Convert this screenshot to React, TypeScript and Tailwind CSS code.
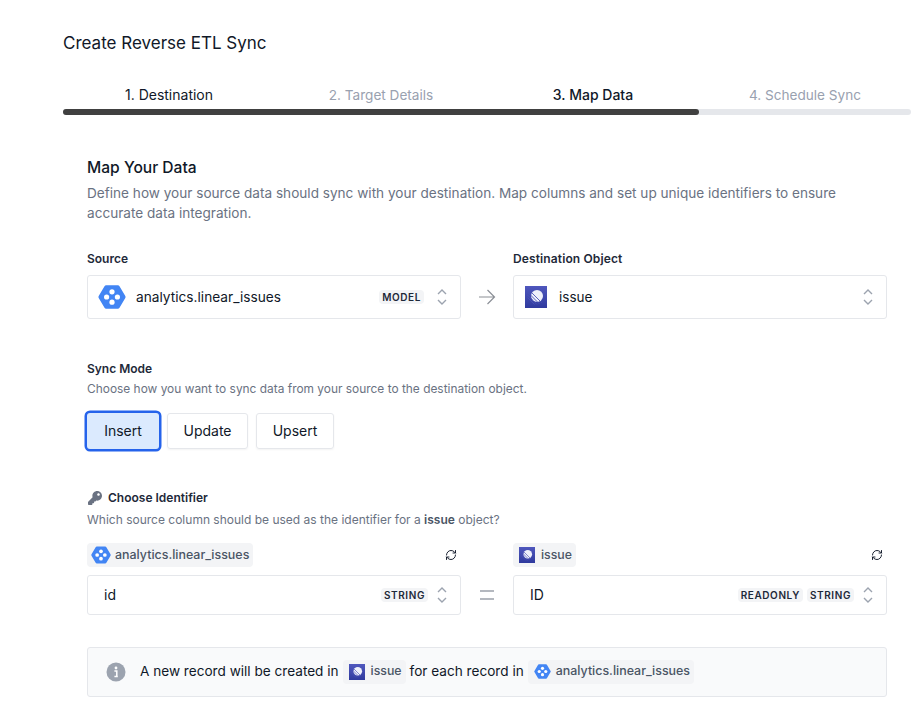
import { RefreshCw } from "lucide-react";
import { FaKey } from "react-icons/fa";

const steps = [
  { label: "1. Destination", className: "text-sm text-gray-900" },
  { label: "2. Target Details", className: "text-[13.6px] text-gray-400" },
  { label: "3. Map Data", className: "text-sm font-medium text-gray-900" },
  { label: "4. Schedule Sync", className: "text-[13.6px] text-gray-400" },
];

function HexIcon({ size }: { size: number }) {
  return (
    <svg width={size} height={size} viewBox="0 0 28 28" className="shrink-0">
      <path d="M8.2 2.2h11.6a2 2 0 0 1 1.7 1l5.8 9.8a2 2 0 0 1 0 2l-5.8 9.8a2 2 0 0 1-1.7 1H8.2a2 2 0 0 1-1.7-1L.7 15a2 2 0 0 1 0-2l5.8-9.8a2 2 0 0 1 1.7-1z" fill="#4285f4" />
      <circle cx="14" cy="8.8" r="2.6" fill="#fff" />
      <circle cx="8.6" cy="14" r="2.6" fill="#fff" />
      <circle cx="19.4" cy="14" r="2.6" fill="#fff" />
      <circle cx="14" cy="19.2" r="2.6" fill="#fff" />
    </svg>
  );
}

function LinearIcon({ size }: { size: number }) {
  return (
    <svg width={size} height={size} viewBox="0 0 22 22" className="shrink-0">
      <defs>
        <linearGradient id="linearBg" x1="0" y1="0" x2="0" y2="1">
          <stop offset="0" stopColor="#4f57bd" />
          <stop offset="1" stopColor="#2f3a9e" />
        </linearGradient>
      </defs>
      <rect width="22" height="22" fill="url(#linearBg)" />
      <circle cx="12" cy="10" r="6" fill="#eef0fa" />
      <path d="M3 6.5l11.5 11.5M2.5 9l9.5 9.5M2.5 11.5l7 7M6 6l10.5 10.5" stroke="#4a52b4" strokeWidth="0.9" />
    </svg>
  );
}

function UpDown() {
  return (
    <svg width="12" height="18" viewBox="0 0 12 18" fill="none" stroke="#9ca3af" strokeWidth="1.4" className="shrink-0">
      <path d="M2 6l4-4 4 4M2 12l4 4 4-4" />
    </svg>
  );
}

function Tag({ children }: { children: string }) {
  return (
    <span className="bg-gray-100 rounded px-[3px] h-[14px] flex items-center text-[10px] font-semibold tracking-[0.06em] text-gray-800">
      {children}
    </span>
  );
}

function Chip({ children, className }: { children: React.ReactNode; className: string }) {
  return (
    <span className={`inline-flex items-center bg-gray-100 rounded text-gray-600 font-medium ${className}`}>
      {children}
    </span>
  );
}

export default function App() {
  return (
    <div className="w-[924px] h-[728px] overflow-hidden bg-white pl-[63px] pr-[13px] pt-[33px] text-gray-900 font-['Inter',sans-serif]">
      <h1 className="text-[17px] leading-[20px] text-gray-900">Create Reverse ETL Sync</h1>

      {/* Steps */}
      <div className="mt-[32px]">
        <div className="grid grid-cols-4">
          {steps.map((s) => (
            <div key={s.label} className={`text-center leading-[20px] ${s.className}`}>
              {s.label}
            </div>
          ))}
        </div>
        <div className="mt-[4px] h-[6px] rounded-full bg-gray-200">
          <div className="h-full w-3/4 rounded-full bg-[#404040]" />
        </div>
      </div>

      <div className="px-[24px] pt-[43px]">
        <h2 className="text-[15.6px] leading-[20px] font-medium text-gray-900">Map Your Data</h2>
        <p className="mt-[5px] text-[13.6px] leading-[20px] text-gray-500">
          Define how your source data should sync with your destination. Map columns and set up unique identifiers to ensure accurate data integration.
        </p>

        {/* Source / destination */}
        <div className="mt-[28px] flex">
          <div className="w-[374px]">
            <div className="text-xs leading-[16px] font-semibold text-gray-800">Source</div>
            <div className="mt-[8px] h-[44px] border border-gray-200 rounded-[3px] flex items-center pl-[10px] pr-[12px]">
              <HexIcon size={28} />
              <span className="ml-[10px] text-[13.7px] text-gray-900">analytics.linear_issues</span>
              <span className="ml-auto mr-[12px]"><Tag>MODEL</Tag></span>
              <UpDown />
            </div>
          </div>
          <div className="w-[52px] flex items-center justify-center pt-[24px]">
            <svg width="18" height="16" viewBox="0 0 18 16" fill="none" stroke="#8b8f96" strokeWidth="1.2">
              <path d="M1 8h15.5M9.5 1l7 7-7 7" />
            </svg>
          </div>
          <div className="w-[374px]">
            <div className="text-xs leading-[16px] font-semibold tracking-[0.01em] text-gray-800">Destination Object</div>
            <div className="mt-[8px] h-[44px] border border-gray-200 rounded-[3px] flex items-center pl-[11px] pr-[12px]">
              <LinearIcon size={22} />
              <span className="ml-[12px] text-[13.5px] text-gray-900">issue</span>
              <span className="ml-auto"><UpDown /></span>
            </div>
          </div>
        </div>

        {/* Sync mode */}
        <div className="mt-[42px] text-xs leading-[16px] font-semibold text-gray-800">Sync Mode</div>
        <p className="mt-[4px] text-[11.92px] leading-[16px] text-gray-500">Choose how you want to sync data from your source to the destination object.</p>
        <div className="mt-[16px] flex gap-[8px]">
          <button className="w-[72px] h-[36px] rounded-[3px] bg-blue-100 ring-[2.5px] ring-[#2563eb] text-sm text-gray-900">Insert</button>
          <button className="w-[81px] h-[36px] rounded-[3px] border border-gray-200 shadow-xs text-sm text-gray-900">Update</button>
          <button className="w-[78px] h-[36px] rounded-[3px] border border-gray-200 shadow-xs text-sm text-gray-900">Upsert</button>
        </div>

        {/* Identifier */}
        <div className="mt-[41px] flex items-center text-xs leading-[16px] font-semibold text-gray-800">
          <FaKey size={14} className="text-gray-500 mr-[6px] ml-[1px]" />
          Choose Identifier
        </div>
        <p className="mt-[6px] text-xs leading-[16px] text-gray-500">
          Which source column should be used as the identifier for a <b className="font-semibold text-gray-600">issue</b> object?
        </p>
        <div className="mt-[15px] flex">
          <div className="w-[374px]">
            <div className="flex items-center justify-between h-[24px]">
              <Chip className="h-[24px] pl-[4px] pr-[4px] gap-[4px] text-[12.45px]">
                <HexIcon size={20} />
                analytics.linear_issues
              </Chip>
              <RefreshCw size={12} strokeWidth={1.9} className="mr-[4px] text-gray-900" />
            </div>
            <div className="mt-[8px] h-[40px] border border-gray-200 rounded-[3px] flex items-center pl-[16px] pr-[12px]">
              <span className="text-sm text-gray-900">id</span>
              <span className="ml-auto mr-[8px]"><Tag>STRING</Tag></span>
              <UpDown />
            </div>
          </div>
          <div className="w-[52px] flex items-center justify-center pt-[32px]">
            <svg width="14" height="10" viewBox="0 0 14 10" stroke="#6b7280" strokeWidth="1.2"><path d="M0 1h14M0 9h14" /></svg>
          </div>
          <div className="w-[374px]">
            <div className="flex items-center justify-between h-[24px]">
              <Chip className="h-[24px] pl-[6px] pr-[4px] gap-[6px] text-[12.3px]">
                <LinearIcon size={16} />
                issue
              </Chip>
              <RefreshCw size={12} strokeWidth={1.9} className="mr-[4px] text-gray-900" />
            </div>
            <div className="mt-[8px] h-[40px] border border-gray-200 rounded-[3px] flex items-center pl-[16px] pr-[12px]">
              <span className="text-sm text-gray-900">ID</span>
              <span className="ml-auto"><Tag>READONLY</Tag></span>
              <span className="mr-[8px] ml-[4px]"><Tag>STRING</Tag></span>
              <UpDown />
            </div>
          </div>
        </div>

        {/* Info */}
        <div className="mt-[32px] h-[50px] pb-[1px] bg-gray-50 border border-gray-200 rounded-[3px] flex items-center pl-[18px] text-[13.6px] text-gray-900">
          <svg width="20" height="20" viewBox="0 0 20 20" className="shrink-0 mr-[14px]">
            <circle cx="10" cy="10" r="9.5" fill="#9ca3af" />
            <circle cx="10" cy="6" r="1.4" fill="#fff" />
            <path d="M8.4 9h2.4v5.2M8.4 14.4h3.4" stroke="#fff" strokeWidth="1.5" fill="none" />
          </svg>
          A new record will be created in
          <Chip className="h-[24px] ml-[4px] pl-[6px] pr-[4px] gap-[6px] text-[12.3px]">
            <LinearIcon size={16} />
            issue
          </Chip>
          <span className="ml-[4px]">for each record in</span>
          <Chip className="h-[24px] ml-[4px] pl-[6px] pr-[4px] gap-[5px] text-[12.45px]">
            <HexIcon size={17} />
            analytics.linear_issues
          </Chip>
        </div>
      </div>
    </div>
  );
}
